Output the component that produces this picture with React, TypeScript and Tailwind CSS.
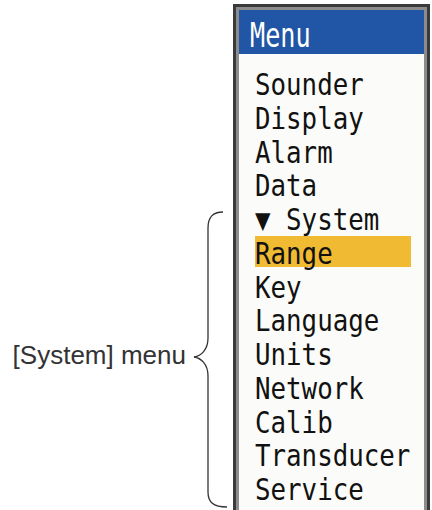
const items = [
  "Sounder",
  "Display",
  "Alarm",
  "Data",
  "▼ System",
  "Range",
  "Key",
  "Language",
  "Units",
  "Network",
  "Calib",
  "Transducer",
  "Service",
];

const mono = { fontFamily: '"DejaVu Sans Mono", "Liberation Mono", monospace' };

function Brace() {
  return (
    <svg width="40" height="302" viewBox="0 0 40 302" className="mt-[208px] shrink-0">
      <path
        d="M30 4 C20 4 15 9 15 20 L15 130 C15 142 8 148 1 149 C8 150 15 156 15 168 L15 284 C15 294 20 299 34 299"
        fill="none"
        stroke="#333"
        strokeWidth="1.3"
      />
    </svg>
  );
}

function MenuRow({ label, selected }: { label: string; selected: boolean }) {
  return (
    <div className="h-[33.75px]">
      <div className={`h-[31px] flex items-end ${selected ? "bg-[#f0bb33]" : ""}`}>
        <span
          className="inline-block origin-left scale-x-[0.86] whitespace-pre text-[30px] leading-[26px] text-[#111]"
          style={mono}
        >
          {label}
        </span>
      </div>
    </div>
  );
}

export default function App() {
  return (
    <div className="w-[432px] h-[510px] overflow-hidden bg-white flex">
      <div
        className="w-[193px] shrink-0 pt-[341px] pr-[7px] text-right text-[26px] leading-[28px] text-[#333]"
        style={{ fontFamily: '"Liberation Sans", Arial, sans-serif' }}
      >
        [System] menu
      </div>
      <Brace />
      <div className="mt-[4px] w-[197px] h-[520px] shrink-0 border-[3px] border-[#3a3a3a]">
        <div className="h-full border-[3px] border-[#8c8c8c] bg-[#fbfcf9]">
          <div className="h-[44px] bg-[#2155a5] pl-[11px] pt-[7px]">
            <span
              className="inline-block origin-left scale-x-[0.74] text-[34px] leading-[37px] text-white"
              style={mono}
            >
              Menu
            </span>
          </div>
          <div className="pt-[13px] pl-[16px] pr-[13px]">
            {items.map((item) => (
              <MenuRow key={item} label={item} selected={item === "Range"} />
            ))}
          </div>
        </div>
      </div>
    </div>
  );
}
